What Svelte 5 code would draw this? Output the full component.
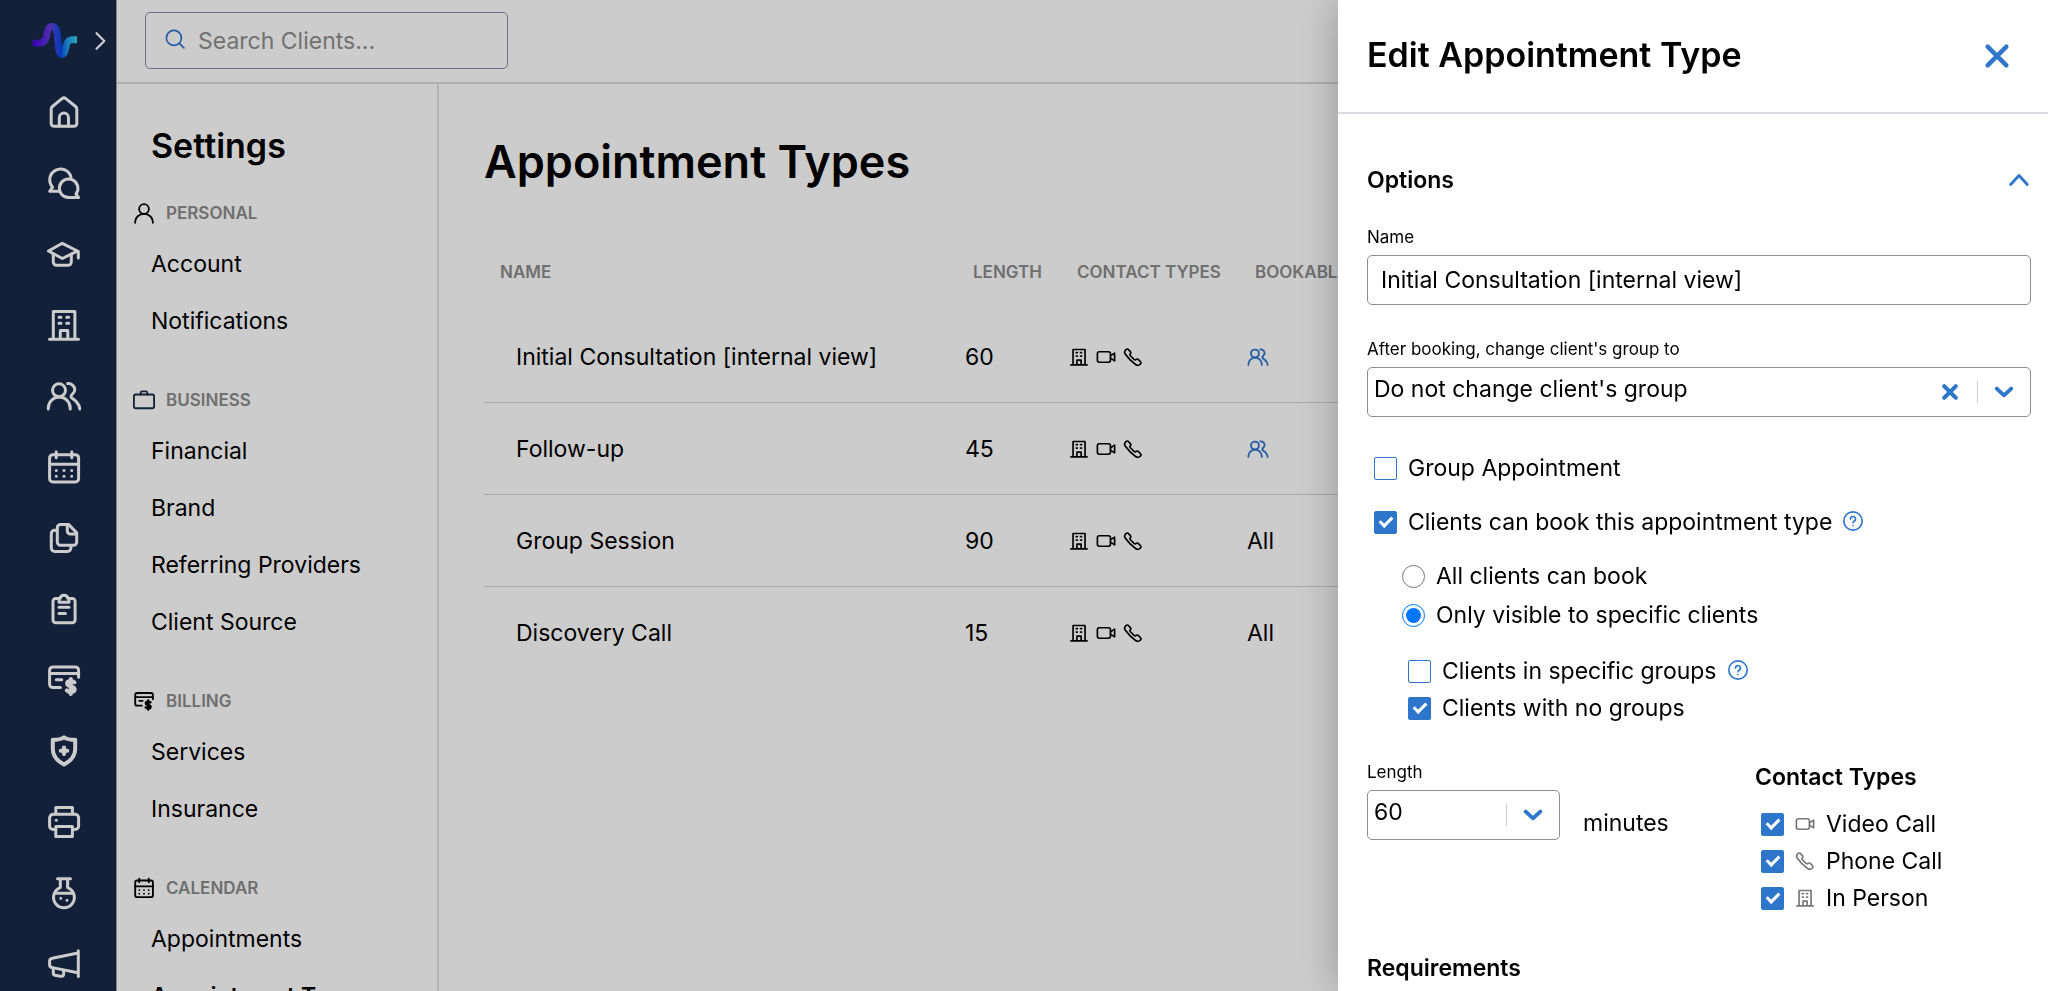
<script lang="ts">
	type Contact = 'building' | 'video' | 'phone';

	const rail = [
		{ icon: 'home', label: 'Home' },
		{ icon: 'chat', label: 'Messages' },
		{ icon: 'school', label: 'Programs' },
		{ icon: 'building', label: 'Organization' },
		{ icon: 'people', label: 'Clients' },
		{ icon: 'calendar', label: 'Calendar' },
		{ icon: 'docs', label: 'Documents' },
		{ icon: 'clipboard', label: 'Forms' },
		{ icon: 'card', label: 'Billing' },
		{ icon: 'shield', label: 'Insurance' },
		{ icon: 'printer', label: 'Fax' },
		{ icon: 'flask', label: 'Labs' },
		{ icon: 'megaphone', label: 'Marketing' }
	];

	const sections = [
		{ icon: 'person', title: 'Personal', items: ['Account', 'Notifications'] },
		{
			icon: 'briefcase',
			title: 'Business',
			items: ['Financial', 'Brand', 'Referring Providers', 'Client Source']
		},
		{ icon: 'card', title: 'Billing', items: ['Services', 'Insurance'] },
		{ icon: 'calendar', title: 'Calendar', items: ['Appointments', 'Appointment Types'] }
	];
	const current = 'Appointment Types';

	const contacts: Contact[] = ['building', 'video', 'phone'];
	const types = [
		{ name: 'Initial Consultation [internal view]', length: 60, all: false },
		{ name: 'Follow-up', length: 45, all: false },
		{ name: 'Group Session', length: 90, all: true },
		{ name: 'Discovery Call', length: 15, all: true }
	];

	let name = $state('Initial Consultation [internal view]');
	let group = $state('none');
	let length = $state(60);
	let isGroup = $state(false);
	let bookable = $state(true);
	let audience = $state('specific');
	let inGroups = $state(false);
	let noGroups = $state(true);
	let contactTypes = $state([
		{ icon: 'video', label: 'Video Call', on: true },
		{ icon: 'phone', label: 'Phone Call', on: true },
		{ icon: 'building', label: 'In Person', on: true }
	]);
</script>

{#snippet icon(id: string)}
	<svg class="icon icon-{id}" viewBox="0 0 36 36" aria-hidden="true">
		{#if id === 'home'}
			<path d="M5.2 15c0-1.1.4-1.9 1.2-2.5L16 4.7a3 3 0 0 1 3.8 0l9.8 7.8c.8.6 1.2 1.4 1.2 2.5v14.5a2.8 2.8 0 0 1-2.8 2.8H8a2.8 2.8 0 0 1-2.8-2.8Z" />
			<path d="M13.3 32v-8.3a4.6 4.6 0 0 1 9.2 0V32" />
		{:else if id === 'chat'}
			<path d="M25 12.2A10.8 10.8 0 1 0 6.6 22.2L3.7 26.3H12.3" />
			<path d="M22.7 32.6A9.3 9.3 0 1 1 30 29L32.6 32.6Z" />
		{:else if id === 'school'}
			<path d="M2.5 15 16.3 7.3 31.5 15 16.3 22.5Z" />
			<path d="M32.3 22v-6.5M7.3 18v8a3.3 3.3 0 0 0 3.3 3.3H22a3.3 3.3 0 0 0 3.3-3.3v-8" />
		{:else if id === 'building'}
			<path d="M3.5 32.3h29M7.3 32V4.5h21.6V32M14.3 32v-8.5h7.5V32" />
			<path d="M13 10.2h2M20.7 10.2h2M13 16.3h2M20.7 16.3h2" />
		{:else if id === 'people'}
			<circle cx="13" cy="12.3" r="6.5" />
			<path d="M2.3 31v-1a10.9 10.9 0 0 1 21.9 0v1M21.6 5.6c4.3-.3 7.2 2.7 7.2 6.2 0 3.6-3.4 4-3.8 6.7 0 1.8 2.6 2.4 4.9 4.8 2.2 2.3 3.7 4.7 3.8 7.7" />
		{:else if id === 'calendar'}
			<rect x="3.6" y="5.7" width="29" height="27.3" rx="3.2" />
			<path d="M3.6 15.3h29M10.2 2.7v6M25.8 2.7v6" />
			<path class="dots" d="M10.3 21.4v0M18 21.4v0M25.7 21.4v0M10.3 27.3v0M18 27.3v0M25.7 27.3v0" />
		{:else if id === 'docs'}
			<path d="M22.5 4.4h-7.9a3.3 3.3 0 0 0-3.3 3.3V22a3.3 3.3 0 0 0 3.3 3.3h12.8a3.3 3.3 0 0 0 3.3-3.3v-9.2Z" />
			<path d="M21.3 4.6V11a3 3 0 0 0 3 3h6.2M11.3 10.3H8.6a3.3 3.3 0 0 0-3.3 3.3V28.1a3.3 3.3 0 0 0 3.3 3.3h13a3.3 3.3 0 0 0 3.3-3.3v-2.5" />
		{:else if id === 'clipboard'}
			<path d="M12.5 7.5H9.8a2.8 2.8 0 0 0-2.8 2.8v18.6a2.8 2.8 0 0 0 2.8 2.8h16.5a2.8 2.8 0 0 0 2.8-2.8V10.3a2.8 2.8 0 0 0-2.8-2.8h-2.7" />
			<path d="M13 7.3h1.2a3.9 3.9 0 0 1 7.6 0H23v4H13ZM13 16.3h10M13 22.5h6.5" />
		{:else if id === 'card'}
			<path d="M14.5 25.6H6.9a3.3 3.3 0 0 1-3.3-3.3V8.2a3.3 3.3 0 0 1 3.3-3.3h22.4a3.3 3.3 0 0 1 3.3 3.3v7M3.6 11.6h29M10.3 17.7h5.5" />
			<path class="heavy" d="M28.5 20.4c-1-1-2.2-1.4-3.8-1.4-2 0-3.6.8-3.6 2.6 0 3.7 7.6 1.9 7.6 5.7 0 1.8-1.7 2.7-3.8 2.7-1.7 0-3.1-.5-4.1-1.6M24.8 17v15" />
		{:else if id === 'shield'}
			<path class="heavy" d="M18 4.3c-2.6 1.7-6.5 2.5-11.2 2.5v9.5c0 6.7 4.2 11.5 11.2 15.2 7-3.7 11.2-8.5 11.2-15.2V6.8c-4.7 0-8.6-.8-11.2-2.5Z" />
			<path class="heavy" d="M18 14.5v6.6M14.7 17.8h6.6" />
		{:else if id === 'printer'}
			<path d="M9.8 25.5H7.2a3.6 3.6 0 0 1-3.6-3.6v-8a3.6 3.6 0 0 1 3.6-3.6h21.8a3.6 3.6 0 0 1 3.6 3.6v8a3.6 3.6 0 0 1-3.6 3.6h-2.6" />
			<path d="M9.8 10V3.6h16.6V10M9.8 22.5h16.6v10H9.8Z" />
			<path class="dots" d="M10.3 16.3v0" />
		{:else if id === 'flask'}
			<path d="M11.5 3.8h13M14.3 4v8.7a10.4 10.4 0 1 0 7.3 0V4M8.3 18.3h19.4" />
			<path class="dots" d="M14.8 23.2v0M21 25.3v0" />
		{:else if id === 'megaphone'}
			<path d="M32.3 4.8v25.7M32 7 6.3 12.2a3.2 3.2 0 0 0-2.7 3.2v3a3.2 3.2 0 0 0 2.7 3.2L32 26.8" />
			<path d="M7.3 22v5.3a2 2 0 0 0 1.6 2l5.5 1c2 .2 3.3-.5 3.3-2.4v-3.7" />
		{:else if id === 'person'}
			<circle cx="18" cy="11.5" r="8" />
			<path d="M3.5 34v-1.5a14.5 13 0 0 1 29 0V34" />
		{:else if id === 'briefcase'}
			<rect x="1.5" y="9" width="33" height="22.5" rx="3" />
			<path d="M12.5 9V6.5A2.5 2.5 0 0 1 15 4h6a2.5 2.5 0 0 1 2.5 2.5V9" />
		{:else if id === 'video'}
			<rect x="2.5" y="8.5" width="23.5" height="19" rx="3.5" />
			<path d="m26 16 7.5-5v14L26 20" />
		{:else if id === 'phone'}
			<path d="M23.2 31.9l.1.1a6 6 0 0 0 7.5-.9l.8-.8a2.6 2.6 0 0 0 0-3.7l-4.2-4.2a2.6 2.6 0 0 0-3.7 0 2.6 2.6 0 0 1-3.7 0l-6.7-6.7a2.6 2.6 0 0 1 0-3.7 2.6 2.6 0 0 0 0-3.7L9.4 4.4a2.6 2.6 0 0 0-3.7 0l-.8.8a6 6 0 0 0-.9 7.5A70 70 0 0 0 23.2 31.9Z" />
		{:else if id === 'search'}
			<circle cx="16" cy="16" r="13.5" />
			<path d="m26 26 8 8" />
		{:else if id === 'help'}
			<circle cx="18" cy="18" r="16.5" />
			<path d="M13.5 14.5a4.5 4.5 0 1 1 6.5 4c-1.3.7-2 1.4-2 2.8" />
			<path class="dots" d="M18 26.3v0" />
		{:else if id === 'close'}
			<path d="m5 5 26 26M31 5 5 31" />
		{:else if id === 'down'}
			<path d="m5 12 13 12 13-12" />
		{:else if id === 'up'}
			<path d="m3 26 15-16 15 16" />
		{:else if id === 'right'}
			<path d="m10 4 14 14-14 14" />
		{/if}
	</svg>
{/snippet}

<div class="page">
	<nav class="rail" aria-label="Main">
		<div class="brand">
			<svg class="logo" viewBox="0 0 46 36" aria-hidden="true">
				<defs>
					<linearGradient id="pulse" gradientUnits="userSpaceOnUse" x1="2" y1="20" x2="45" y2="20">
						<stop offset="0" stop-color="#4a08d8" />
						<stop offset=".22" stop-color="#5a22e0" />
						<stop offset=".4" stop-color="#6040d8" />
						<stop offset=".62" stop-color="#0648e8" />
						<stop offset=".76" stop-color="#1c94ea" />
						<stop offset="1" stop-color="#3cd0e4" />
					</linearGradient>
				</defs>
				<circle cx="3.5" cy="20" r="3.3" fill="#4a08d8" />
				<path
					d="M3.5 20c8 .5 9.8-1 11.3-8 .8-4 1.5-8.500 5.2-8.500 4.300 0 4.800 4 5.400 9l1.200 12c.3 3.500.8 7 3 7 2.800 0 3.400-3.500 4.200-7.500 1-5 2.500-7.200 6-7.200H45"
					stroke="url(#pulse)"
				/>
			</svg>
			<button class="expand" aria-label="Expand menu">{@render icon('right')}</button>
		</div>
		{#each rail as entry (entry.icon)}
			<a href="#{entry.icon}" aria-label={entry.label}>{@render icon(entry.icon)}</a>
		{/each}
	</nav>

	<div class="content">
		<header class="topbar">
			<label class="search">
				{@render icon('search')}
				<input type="search" placeholder="Search Clients..." aria-label="Search Clients" />
			</label>
		</header>

		<div class="columns">
			<aside class="settings">
				<h2>Settings</h2>
				{#each sections as section (section.title)}
					<section>
						<h3>{@render icon(section.icon)}{section.title}</h3>
						<ul>
							{#each section.items as item (item)}
								<li><a href="#settings" class:current={item === current}>{item}</a></li>
							{/each}
						</ul>
					</section>
				{/each}
			</aside>

			<main>
				<h1>Appointment Types</h1>
				<table>
					<thead>
						<tr>
							<th class="name">Name</th>
							<th class="length">Length</th>
							<th class="contact">Contact Types</th>
							<th>Bookable By</th>
						</tr>
					</thead>
					<tbody>
						{#each types as type (type.name)}
							<tr>
								<td class="name">{type.name}</td>
								<td>{type.length}</td>
								<td>
									<span class="contacts">
										{#each contacts as contact (contact)}
											{@render icon(contact)}
										{/each}
									</span>
								</td>
								<td>
									{#if type.all}
										All
									{:else}
										<span class="groups">{@render icon('people')}</span>
									{/if}
								</td>
							</tr>
						{/each}
					</tbody>
				</table>
			</main>
		</div>
	</div>
</div>

<div class="overlay"></div>

<div class="drawer" role="dialog" aria-labelledby="drawer-title">
	<header>
		<h2 id="drawer-title">Edit Appointment Type</h2>
		<button class="close-drawer" aria-label="Close">{@render icon('close')}</button>
	</header>

	<form>
		<div class="section-title">
			<h3>Options</h3>
			<button type="button" aria-label="Collapse options">{@render icon('up')}</button>
		</div>

		<div class="field">
			<label for="name">Name</label>
			<input id="name" type="text" bind:value={name} />
		</div>

		<div class="field">
			<label for="group">After booking, change client's group to</label>
			<div class="select">
				<select id="group" bind:value={group}>
					<option value="none">Do not change client's group</option>
				</select>
				<div class="indicators">
					<button type="button" class="clear" aria-label="Clear">{@render icon('close')}</button>
					<span class="divider"></span>
					{@render icon('down')}
				</div>
			</div>
		</div>

		<div class="choices">
			<label class="choice">
				<input type="checkbox" bind:checked={isGroup} />
				Group Appointment
			</label>
			<div class="choice-row">
				<label class="choice">
					<input type="checkbox" bind:checked={bookable} />
					Clients can book this appointment type
				</label>
				<button type="button" class="info" aria-label="Help">{@render icon('help')}</button>
			</div>
		</div>

		<div class="choices radios">
			<label class="choice">
				<input type="radio" name="audience" value="all" bind:group={audience} />
				All clients can book
			</label>
			<label class="choice">
				<input type="radio" name="audience" value="specific" bind:group={audience} />
				Only visible to specific clients
			</label>
		</div>

		<div class="choices nested">
			<div class="choice-row">
				<label class="choice">
					<input type="checkbox" bind:checked={inGroups} />
					Clients in specific groups
				</label>
				<button type="button" class="info" aria-label="Help">{@render icon('help')}</button>
			</div>
			<label class="choice">
				<input type="checkbox" bind:checked={noGroups} />
				Clients with no groups
			</label>
		</div>

		<div class="split">
			<div class="duration">
				<div class="field">
					<label for="length">Length</label>
					<div class="select">
						<select id="length" bind:value={length}>
							<option value={60}>60</option>
						</select>
						<div class="indicators">
							<span class="divider"></span>
							{@render icon('down')}
						</div>
					</div>
				</div>
				<span class="unit">minutes</span>
			</div>
			<fieldset>
				<legend>Contact Types</legend>
				{#each contactTypes as contact (contact.label)}
					<label class="choice">
						<input type="checkbox" bind:checked={contact.on} />
						{@render icon(contact.icon)}
						{contact.label}
					</label>
				{/each}
			</fieldset>
		</div>

		<h3 class="requirements">Requirements</h3>
	</form>
</div>

<style>
	:global(body) {
		overflow: hidden;
		font-family: Inter, 'Liberation Sans', sans-serif;
		font-size: 23px;
		color: #000;
	}
	h1, h2, h3, ul {
		margin: 0;
		padding: 0;
		font-weight: 600;
	}
	a {
		color: inherit;
		text-decoration: none;
	}
	button {
		padding: 0;
		border: 0;
		background: none;
		color: inherit;
		display: flex;
	}
	input, select {
		font: inherit;
		color: inherit;
		box-sizing: border-box;
	}

	.icon {
		width: 20px;
		height: 20px;
		flex: none;
		fill: none;
		stroke: currentColor;
		stroke-width: 3;
		stroke-linecap: round;
		stroke-linejoin: round;
	}
	.icon .heavy {
		stroke-width: 4;
	}

	.page {
		height: 100vh;
		display: flex;
		background: #fff;
	}

	/* rail */
	.rail {
		width: 117px;
		flex: none;
		box-sizing: border-box;
		padding-left: 12px;
		display: flex;
		flex-direction: column;
		align-items: center;
		background: #182848;
		border-right: 1px solid #a0a4ae;
		color: #fff;
		overflow: hidden;
	}
	.rail a {
		height: 71px;
		flex: none;
		display: flex;
		align-items: center;
	}
	.rail a .icon {
		width: 36px;
		height: 36px;
	}
	.brand {
		height: 76px;
		box-sizing: border-box;
		padding: 6px 0 0 14px;
		flex: none;
		display: flex;
		align-items: center;
		gap: 13px;
	}
	.logo {
		width: 46px;
		height: 36px;
		fill: none;
		stroke-width: 7;
	}
	.expand .icon {
		stroke-width: 4;
	}

	/* top bar */
	.content {
		flex: 1;
		min-width: 0;
		display: flex;
		flex-direction: column;
	}
	.topbar {
		padding: 12px 28px 13px;
		border-bottom: 2px solid #dcdcdc;
	}
	.search {
		width: 363px;
		height: 57px;
		box-sizing: border-box;
		padding-left: 19px;
		display: flex;
		align-items: center;
		gap: 13px;
		border: 1px solid #8b8d98;
		border-radius: 5px;
	}
	.icon-search {
		color: #2e75cc;
		padding-bottom: 4px;
	}
	.search input {
		flex: 1;
		min-width: 0;
		padding: 0;
		border: 0;
		background: none;
		outline: none;
	}
	.search input::placeholder {
		color: #8e8e8e;
	}

	/* settings menu */
	.columns {
		flex: 1;
		min-height: 0;
		display: flex;
	}
	.settings {
		width: 320px;
		flex: none;
		padding-top: 41px;
		border-right: 2px solid #dfdfdf;
		overflow: hidden;
	}
	.settings h2 {
		padding-left: 34px;
		font-size: 34px;
		line-height: 42px;
		margin-bottom: 34px;
	}
	.settings section {
		margin-bottom: 38px;
	}
	.settings h3 {
		display: flex;
		align-items: center;
		gap: 11px;
		padding-left: 16px;
		margin-bottom: 11px;
		line-height: 24px;
		font-size: 17px;
		text-transform: uppercase;
		color: #8b8b8b;
	}
	.settings h3 .icon {
		width: 22px;
		height: 22px;
		color: #000;
	}
	.settings h3 .icon-briefcase {
		color: #182848;
	}
	.settings ul {
		list-style: none;
		font-weight: 400;
	}
	.settings li a {
		display: block;
		padding-left: 34px;
		line-height: 57px;
	}
	.settings .current {
		font-weight: 600;
	}

	/* list of types */
	main {
		flex: 1;
		min-width: 0;
		padding: 50px 45px 0;
	}
	h1 {
		font-size: 45px;
		line-height: 56px;
	}
	table {
		width: 100%;
		margin-top: 56px;
		table-layout: fixed;
		border-collapse: collapse;
		text-align: left;
	}
	th {
		height: 65px;
		padding: 0 8px 14px;
		font-size: 17px;
		font-weight: 600;
		text-transform: uppercase;
		color: #8b8b8b;
		box-sizing: border-box;
	}
	th.name {
		width: 481px;
		padding-left: 16px;
	}
	th.length {
		width: 104px;
	}
	th.contact {
		width: 178px;
	}
	td {
		height: 91px;
		padding: 0;
	}
	td.name {
		padding-left: 32px;
	}
	tbody tr + tr {
		border-top: 1px solid #d4d4d4;
	}
	.contacts {
		display: flex;
		gap: 7px;
	}
	.groups {
		display: flex;
		color: #2e75cc;
	}
	.groups .icon {
		width: 22px;
		height: 22px;
	}

	.overlay {
		position: fixed;
		inset: 0;
		background: rgba(0, 0, 0, 0.2);
	}

	/* drawer */
	.drawer {
		position: fixed;
		inset: 0 0 0 auto;
		width: 710px;
		max-width: 100%;
		overflow: hidden;
		background: #fff;
		box-shadow: 0 0 40px rgba(0, 0, 0, 0.28);
	}
	.drawer header {
		height: 112px;
		padding: 0 38px 0 29px;
		display: flex;
		align-items: center;
		justify-content: space-between;
		border-bottom: 2px solid #dcdce2;
	}
	.drawer header h2 {
		font-size: 34px;
		line-height: 42px;
		padding-bottom: 2px;
	}
	.drawer button, .indicators {
		color: #2e75cc;
	}
	.close-drawer .icon {
		width: 26px;
		height: 26px;
		stroke-width: 6;
	}
	form {
		padding: 52px 17px 0 29px;
	}
	.section-title {
		display: flex;
		justify-content: space-between;
		align-items: center;
		padding-right: 2px;
		margin-bottom: 31px;
	}
	form h3, legend {
		font-size: 23px;
		line-height: 28px;
		font-weight: 600;
	}
	.section-title .icon {
		stroke-width: 5;
	}
	.field label {
		display: block;
		margin-bottom: 6px;
		font-size: 17px;
		line-height: 24px;
	}
	.field + .field {
		margin-top: 32px;
	}
	.field input, .select select {
		width: 100%;
		height: 50px;
		display: block;
		padding: 0 13px;
		border: 1px solid #8b8d98;
		border-radius: 5px;
		background: #fff;
	}
	.select {
		position: relative;
	}
	.select select {
		appearance: none;
		padding: 0 6px 6px;
	}
	.indicators {
		position: absolute;
		inset: 0 17px 0 auto;
		display: flex;
		align-items: center;
		gap: 16px;
		pointer-events: none;
	}
	.indicators .icon {
		stroke-width: 7;
	}
	.clear {
		margin-right: 3px;
	}
	.indicators .clear .icon {
		width: 16px;
		height: 16px;
		stroke-width: 9;
	}
	.divider {
		width: 1px;
		height: 22px;
		background: #ccc;
	}

	.choices {
		display: flex;
		flex-direction: column;
		align-items: flex-start;
		gap: 26px;
		padding: 37px 0 0 7px;
	}
	.choice {
		display: flex;
		align-items: center;
		gap: 11px;
		line-height: 28px;
	}
	.choice-row {
		display: flex;
		align-items: center;
		gap: 11px;
	}
	.info {
		padding-bottom: 2px;
	}
	.choices.radios {
		gap: 11px;
		padding: 26px 0 0 35px;
	}
	.choices.nested {
		gap: 9px;
		padding: 28px 0 0 41px;
	}
	.choice input {
		appearance: none;
		width: 23px;
		height: 23px;
		flex: none;
		margin: 0;
		display: grid;
		place-items: center;
		border: 1px solid #2e75cc;
		border-radius: 2px;
		background: #fff;
	}
	.choice input[type='checkbox']:checked {
		background: #2e75cc;
	}
	.choice input[type='checkbox']:checked::after {
		content: '';
		width: 5px;
		height: 10px;
		margin-bottom: 4px;
		border: solid #fff;
		border-width: 0 3px 3px 0;
		transform: rotate(45deg);
	}
	.choice input[type='radio'] {
		border-color: #767676;
		border-radius: 50%;
	}
	.choice input[type='radio']:checked {
		border-color: #0075ff;
	}
	.choice input[type='radio']:checked::after {
		content: '';
		width: 15px;
		height: 15px;
		border-radius: 50%;
		background: #0075ff;
	}

	.split {
		display: grid;
		grid-template-columns: 388px 1fr;
		margin-top: 38px;
	}
	.duration {
		display: flex;
		gap: 23px;
		align-items: flex-end;
		align-self: start;
	}
	.duration .field {
		width: 193px;
	}
	.unit {
		line-height: 28px;
		margin-bottom: 3px;
	}
	fieldset {
		margin: 3px 0 0;
		padding: 5px 0 0;
		border: 0;
		display: flex;
		flex-direction: column;
		gap: 9px;
	}
	legend {
		padding: 0;
		margin-bottom: 14px;
	}
	fieldset .choice {
		padding-left: 6px;
	}
	fieldset .icon {
		color: #777;
	}
	.requirements {
		margin-top: 42px;
	}
</style>
